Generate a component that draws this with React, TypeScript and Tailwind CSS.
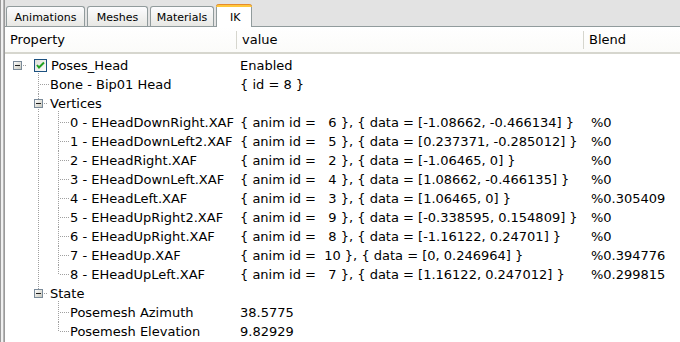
import React from "react";

type Row = {
  level: 0 | 1 | 2;
  label: string;
  value?: string;
  blend?: string;
  kind: "root" | "leaf1" | "group1" | "leaf2";
  last1?: boolean;
  l1Through?: boolean;
  last2?: boolean;
};

const rows: Row[] = [
  { level: 0, label: "Poses_Head", value: "Enabled", kind: "root" },
  { level: 1, label: "Bone - Bip01 Head", value: "{ id = 8 }", kind: "leaf1" },
  { level: 1, label: "Vertices", kind: "group1" },
  { level: 2, label: "0 - EHeadDownRight.XAF", value: "{ anim id =   6 }, { data = [-1.08662, -0.466134] }", blend: "%0", kind: "leaf2", l1Through: true },
  { level: 2, label: "1 - EHeadDownLeft2.XAF", value: "{ anim id =   5 }, { data = [0.237371, -0.285012] }", blend: "%0", kind: "leaf2", l1Through: true },
  { level: 2, label: "2 - EHeadRight.XAF", value: "{ anim id =   2 }, { data = [-1.06465, 0] }", blend: "%0", kind: "leaf2", l1Through: true },
  { level: 2, label: "3 - EHeadDownLeft.XAF", value: "{ anim id =   4 }, { data = [1.08662, -0.466135] }", blend: "%0", kind: "leaf2", l1Through: true },
  { level: 2, label: "4 - EHeadLeft.XAF", value: "{ anim id =   3 }, { data = [1.06465, 0] }", blend: "%0.305409", kind: "leaf2", l1Through: true },
  { level: 2, label: "5 - EHeadUpRight2.XAF", value: "{ anim id =   9 }, { data = [-0.338595, 0.154809] }", blend: "%0", kind: "leaf2", l1Through: true },
  { level: 2, label: "6 - EHeadUpRight.XAF", value: "{ anim id =   8 }, { data = [-1.16122, 0.24701] }", blend: "%0", kind: "leaf2", l1Through: true },
  { level: 2, label: "7 - EHeadUp.XAF", value: "{ anim id =  10 }, { data = [0, 0.246964] }", blend: "%0.394776", kind: "leaf2", l1Through: true },
  { level: 2, label: "8 - EHeadUpLeft.XAF", value: "{ anim id =   7 }, { data = [1.16122, 0.247012] }", blend: "%0.299815", kind: "leaf2", l1Through: true, last2: true },
  { level: 1, label: "State", kind: "group1", last1: true },
  { level: 2, label: "Posemesh Azimuth", value: "38.5775", kind: "leaf2" },
  { level: 2, label: "Posemesh Elevation", value: "9.82929", kind: "leaf2", last2: true },
];

const DOT = "#a0a0a0";
const X0 = 12;
const X1 = 33;
const X2 = 53;
const H = 19;
const MID = 9;

function VDots({ x, y1, y2 }: { x: number; y1: number; y2: number }) {
  const out = [];
  for (let y = y1; y < y2; y += 2) out.push(<rect key={y} x={x} y={y} width={1} height={1} fill={DOT} />);
  return <>{out}</>;
}
function HDots({ y, x1, x2 }: { y: number; x1: number; x2: number }) {
  const out = [];
  for (let x = x1; x < x2; x += 2) out.push(<rect key={x} x={x} y={y} width={1} height={1} fill={DOT} />);
  return <>{out}</>;
}

function ExpBox({ cx }: { cx: number }) {
  const x = cx - 4;
  const y = MID - 4;
  return (
    <>
      <defs>
        <linearGradient id="eb" x1="0" y1="0" x2="1" y2="1">
          <stop offset="0" stopColor="#ffffff" />
          <stop offset="1" stopColor="#c6c6bb" />
        </linearGradient>
      </defs>
      <rect x={x + 0.5} y={y + 0.5} width={8} height={8} fill="url(#eb)" stroke="#7a8a99" strokeWidth={1} />
      <rect x={x + 2} y={MID} width={5} height={1} fill="#1f1f1f" />
    </>
  );
}

function Guides({ r, i }: { r: Row; i: number }) {
  return (
    <svg width={66} height={H} className="shrink-0 block" shapeRendering="crispEdges">
      {r.kind === "root" && (
        <>
          <ExpBox cx={X0} />
          <HDots y={MID} x1={X0 + 6} x2={X0 + 10} />
          <VDots x={X1} y1={MID + 8} y2={H} />
        </>
      )}
      {r.kind === "leaf1" && (
        <>
          <VDots x={X1} y1={0} y2={H} />
          <HDots y={MID} x1={X1 + 2} x2={X1 + 11} />
        </>
      )}
      {r.kind === "group1" && (
        <>
          <VDots x={X1} y1={0} y2={MID - 4} />
          {!r.last1 && <VDots x={X1} y1={MID + 6} y2={H} />}
          <ExpBox cx={X1} />
          <HDots y={MID} x1={X1 + 6} x2={X1 + 10} />
          <VDots x={X2} y1={MID + 8} y2={H} />
        </>
      )}
      {r.kind === "leaf2" && (
        <>
          {r.l1Through && <VDots x={X1} y1={i % 2 ? 1 : 0} y2={H} />}
          <VDots x={X2} y1={0} y2={r.last2 ? MID + 1 : H} />
          <HDots y={MID} x1={X2 + 2} x2={X2 + 11} />
        </>
      )}
    </svg>
  );
}

function CheckBox() {
  return (
    <svg width={13} height={13} className="shrink-0 block" shapeRendering="crispEdges">
      <defs>
        <linearGradient id="cb" x1="0" y1="0" x2="1" y2="1">
          <stop offset="0" stopColor="#dcdcd7" />
          <stop offset="1" stopColor="#ffffff" />
        </linearGradient>
      </defs>
      <rect x={0.5} y={0.5} width={12} height={12} fill="url(#cb)" stroke="#1c5180" />
      <path d="M3 6 L5 8.5 L10 3.5" fill="none" stroke="#21a121" strokeWidth={2} shapeRendering="auto" />
    </svg>
  );
}

function Tab({ label, selected, w }: { label: string; selected?: boolean; w: string }) {
  if (selected) {
    return (
      <div className={`${w} h-[23px] relative -mb-px bg-white border border-[#919b9c] border-b-0 border-t-0 rounded-t-[3px] flex items-center pl-[13px] z-10 text-[11px]`}>
        <div className="absolute left-[-1px] right-[-1px] top-0 h-[3px] bg-[#ffc83c] border-t border-[#e68b2c] rounded-t-[3px]" />
        <span className="pt-[3px]">{label}</span>
      </div>
    );
  }
  return (
    <div className={`${w} h-[20px] bg-gradient-to-b from-[#fcfcfe] to-[#e8e8e4] border border-[#919b9c] border-b-0 rounded-t-[3px] flex items-center justify-center pt-[1px] text-[11px]`}>
      {label}
    </div>
  );
}

export default function App() {
  return (
    <div className="w-[680px] h-[342px] overflow-hidden flex bg-[#e3e3e3] text-[13px] text-black font-['Tahoma','DejaVu_Sans',sans-serif] leading-none">
      <div className="flex shrink-0 h-full">
        <div className="w-px bg-[#9a9a9a]" />
        <div className="w-[2px] bg-[#f0f0f0]" />
        <div className="w-px bg-[#b5b5b5]" />
        <div className="w-px bg-[#9a9a9a]" />
      </div>
      <div className="flex-1 flex flex-col min-w-0">
        <div className="h-[26px] flex items-end gap-[2px] pl-[1px] shrink-0">
          <Tab label="Animations" w="w-[79px]" />
          <Tab label="Meshes" w="w-[61px]" />
          <Tab label="Materials" w="w-[64px]" />
          <Tab label="IK" w="w-[36px]" selected />
        </div>
        <div className="flex-1 bg-white border-t border-[#919b9c] flex flex-col min-h-0">
          <div className="h-[27px] shrink-0 flex items-center border-b-2 border-[#d6d6ce] bg-gradient-to-b from-white to-[#fbfbf9]">
            <div className="w-[232px] h-[18px] flex items-center pl-[5px] border-r border-[#d6d6ce]">Property</div>
            <div className="w-[347px] h-[18px] flex items-center pl-[5px] border-r border-[#d6d6ce]">value</div>
            <div className="flex-1 h-[18px] flex items-center pl-[5px]">Blend</div>
          </div>
          <div className="pt-[2px] flex flex-col">
            {rows.map((r, i) => (
              <div key={i} className="h-[19px] flex items-center whitespace-pre">
                <div className="w-[232px] shrink-0 h-full flex items-center overflow-hidden">
                  <Guides r={r} i={i} />
                  {r.kind === "root" ? (
                    <div className="flex items-center -ml-[37px]">
                      <CheckBox />
                      <span className="ml-[4px]">{r.label}</span>
                    </div>
                  ) : (
                    <span className={r.level === 1 ? "-ml-[21px]" : "-ml-[1px]"}>{r.label}</span>
                  )}
                </div>
                <div className="w-[347px] shrink-0 h-full flex items-center pl-[3px] overflow-hidden">{r.value ?? ""}</div>
                <div className="flex-1 h-full flex items-center pl-[7px]">{r.blend ?? ""}</div>
              </div>
            ))}
          </div>
        </div>
      </div>
    </div>
  );
}
